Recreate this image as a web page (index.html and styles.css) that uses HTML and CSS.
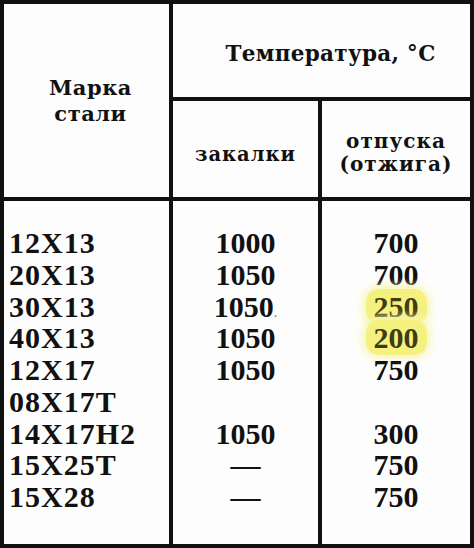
FILE: index.html
```html
<!DOCTYPE html>
<html lang="ru">
<head>
<meta charset="utf-8">
<link rel="stylesheet" href="styles.css">
</head>
<body>
<div class="sheet">
  <div class="cell head grade">Марка<br>стали</div>
  <div class="cell head temp">Температура, °С</div>
  <div class="cell head quench">закалки</div>
  <div class="cell head temper">отпуска<br>(отжига)</div>
  <div class="cell body col-grade">
    <div class="row">12Х13</div>
    <div class="row">20Х13</div>
    <div class="row">30Х13</div>
    <div class="row">40Х13</div>
    <div class="row">12Х17</div>
    <div class="row">08Х17Т</div>
    <div class="row">14Х17Н2</div>
    <div class="row">15Х25Т</div>
    <div class="row">15Х28</div>
  </div>
  <div class="cell body col-num">
    <div class="row">1000</div>
    <div class="row">1050</div>
    <div class="row">1050<span class="dot">.</span></div>
    <div class="row">1050</div>
    <div class="row">1050</div>
    <div class="row"></div>
    <div class="row">1050</div>
    <div class="row">—</div>
    <div class="row">—</div>
  </div>
  <div class="cell body col-num">
    <div class="row">700</div>
    <div class="row">700</div>
    <div class="row"><span class="hl">250</span></div>
    <div class="row"><span class="hl">200</span></div>
    <div class="row">750</div>
    <div class="row"></div>
    <div class="row">300</div>
    <div class="row">750</div>
    <div class="row">750</div>
  </div>
</div>
</body>
</html>
```

FILE: styles.css
```css
html, body {
  margin: 0;
  padding: 0;
  background: #111;
}
.sheet {
  width: 474px;
  height: 548px;
  box-sizing: border-box;
  padding: 4px;
  background: #111;
  display: grid;
  grid-template-columns: 165px 145px 148px;
  grid-template-rows: 93px 96px 343px;
  gap: 4px;
}
.cell {
  background: #fdfdfd;
  color: #111;
}
.head {
  font-family: "DejaVu Serif", serif;
  font-weight: bold;
  display: flex;
  align-items: center;
  justify-content: center;
  text-align: center;
}
.grade {
  grid-row: 1 / 3;
  grid-column: 1;
  font-size: 21px;
  line-height: 26px;
  letter-spacing: 0.5px;
  padding-left: 8px;
}
.temp {
  grid-row: 1;
  grid-column: 2 / 4;
  font-size: 21.5px;
  letter-spacing: 0.3px;
  padding-left: 18px;
  padding-top: 6px;
}
.quench {
  font-size: 19.5px;
  letter-spacing: 1px;
  padding-top: 10px;
}
.temper {
  font-size: 20px;
  line-height: 23px;
  letter-spacing: 1px;
  padding-top: 7px;
}
.body {
  font-family: "Liberation Serif", serif;
  font-weight: bold;
  font-size: 30px;
  padding-top: 26px;
}
.row {
  height: 31.75px;
  line-height: 31.75px;
  white-space: nowrap;
}
.col-grade {
  padding-left: 5px;
  letter-spacing: 1px;
}
.col-num {
  text-align: center;
}
.dot {
  font-size: 14px;
  font-weight: normal;
  color: #777;
}
.hl {
  padding: 1px 8px;
  background: #f5f17e;
  border-radius: 13px;
  box-shadow: 0 0 8px 3px #f8f5b0;
  color: #3e3c12;
}
```
